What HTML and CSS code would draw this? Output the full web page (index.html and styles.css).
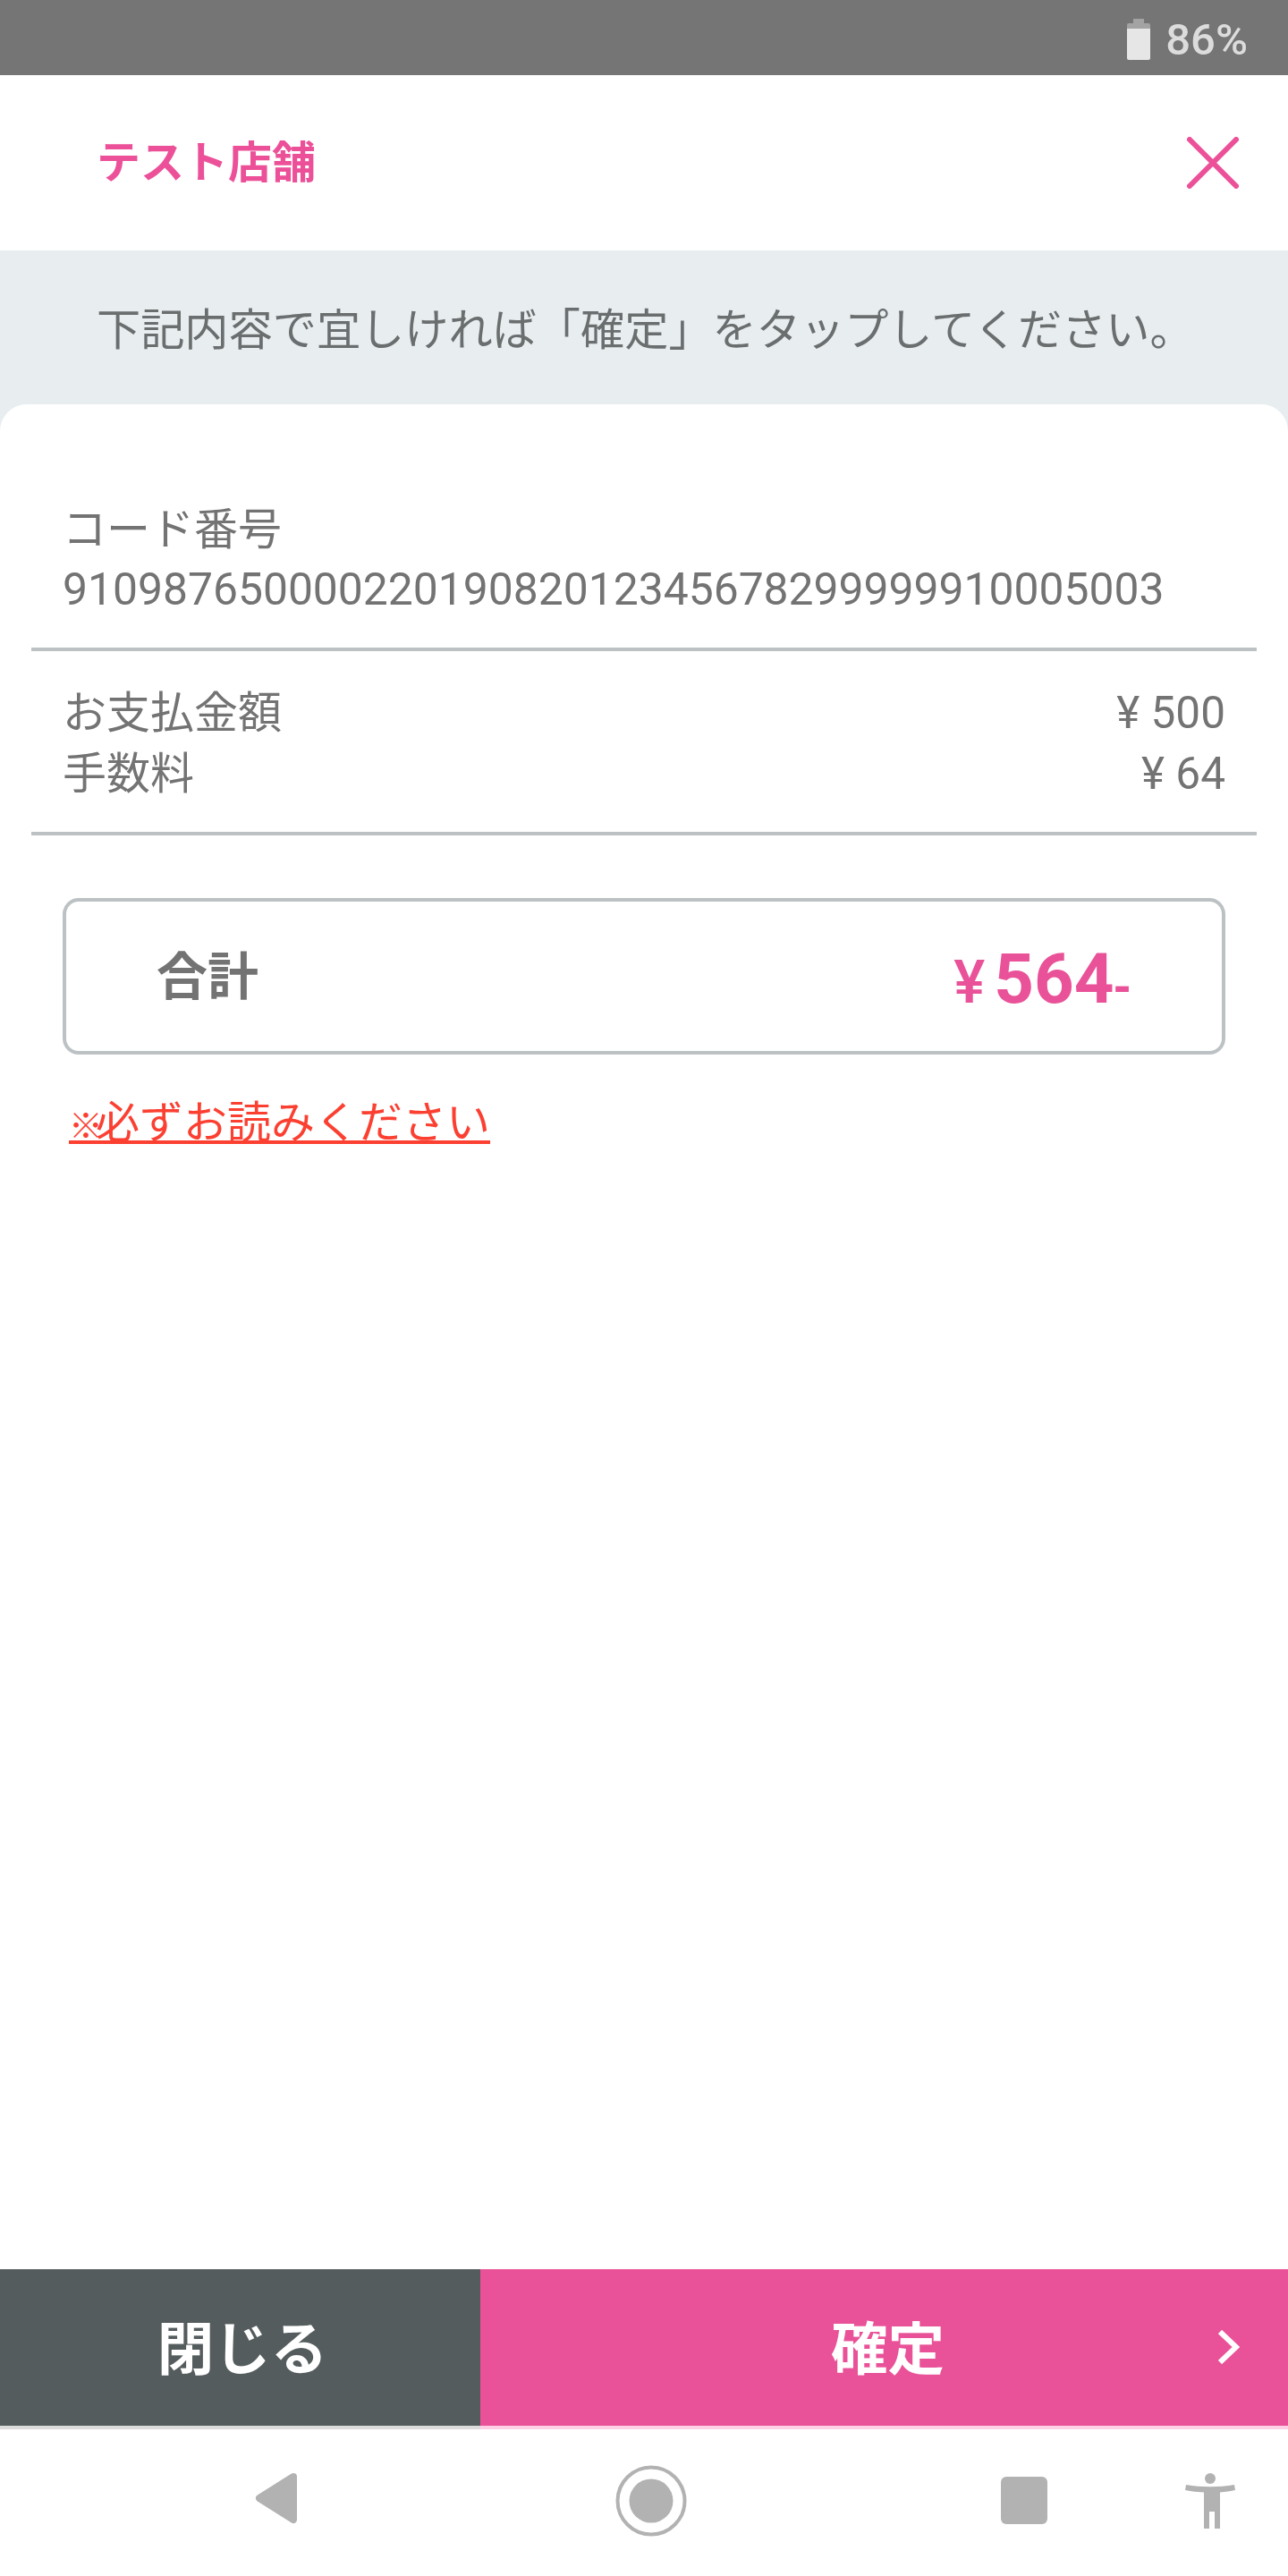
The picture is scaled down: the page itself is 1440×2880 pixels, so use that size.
FILE: index.html
```html
<!DOCTYPE html>
<html lang="ja">
<head>
<meta charset="utf-8">
<title>テスト店舗</title>
<link rel="stylesheet" href="styles.css">
</head>
<body>
<div class="screen">
  <div class="status">
    <svg class="battery" width="26" height="46" viewBox="0 0 26 46"><path class="bat-empty" d="M7 0h12v5h5a2 2 0 0 1 2 2v4H0V7a2 2 0 0 1 2-2h5z"/><path class="bat-full" d="M0 11h26v33a2 2 0 0 1-2 2H2a2 2 0 0 1-2-2z"/></svg>
    <span class="percent">86%</span>
  </div>
  <header class="head">
    <h1 class="store">テスト店舗</h1>
    <svg class="close" width="58" height="58" viewBox="0 0 58 58"><path d="M3 3l52 52M55 3L3 55"/></svg>
  </header>
  <div class="notice-band"><p class="notice">下記内容で宜しければ「確定」をタップしてください。</p></div>
  <main class="card">
    <section class="block code">
      <div class="line">コード番号</div>
      <div class="line number">91098765000022019082012345678299999910005003</div>
    </section>
    <section class="block fees">
      <div class="line row"><span>お支払金額</span><span class="amount">¥ 500</span></div>
      <div class="line row"><span>手数料</span><span class="amount">¥ 64</span></div>
    </section>
    <div class="total">
      <span class="total-label">合計</span>
      <span class="total-value"><span class="yen">¥</span><span class="sum">564</span><span class="dash">-</span></span>
    </div>
    <a class="warning"><span class="mark">※</span>必ずお読みください</a>
  </main>
  <div class="actions">
    <div class="btn btn-close">閉じる</div>
    <div class="btn btn-ok">確定
      <svg class="chevron" width="24" height="38" viewBox="0 0 24 38"><path d="M2 2l18 17L2 36"/></svg>
    </div>
  </div>
  <nav class="nav">
    <svg class="nav-back" width="50" height="58" viewBox="0 0 50 58"><path d="M43 5L5 29l38 24z"/></svg>
    <svg class="nav-home" width="80" height="80" viewBox="0 0 80 80"><circle class="ring" cx="40" cy="40" r="37.5"/><circle cx="40" cy="40" r="24.5"/></svg>
    <svg class="nav-recent" width="52" height="53" viewBox="0 0 52 53"><rect width="52" height="53" rx="6"/></svg>
    <svg class="nav-a11y" width="56" height="62" viewBox="0 0 56 62"><circle cx="28" cy="6" r="6"/><path d="M1 13c18 3 36 3 54 0l1 6c-5 1-11 2-17 2.500V62h-6V43h-6v19h-6V21.500C11 21 5 20 0 19z"/></svg>
  </nav>
</div>
</body>
</html>
```
FILE: styles.css
```css
* { box-sizing: border-box; }
html, body { margin: 0; padding: 0; }
body {
  width: 1440px;
  height: 2880px;
  background: #fff;
  font-family: "Noto Sans CJK JP", "Roboto", sans-serif;
  color: #737373;
}
.screen { display: flex; flex-direction: column; height: 2880px; }

.status {
  height: 84px;
  background: #757575;
  display: flex;
  align-items: flex-start;
  justify-content: flex-end;
  padding: 21px 45px 0 0;
}
.battery { display: block; margin-right: 17px; }
.bat-empty { fill: #a3a3a3; }
.bat-full { fill: #e6e6e6; }
.percent {
  font-family: "Roboto", sans-serif;
  font-weight: 500;
  font-size: 49px;
  line-height: 48px;
  color: #dcdcdc;
}

.head {
  height: 196px;
  display: flex;
  align-items: center;
  justify-content: space-between;
  padding: 0 55px 0 108px;
}
.store {
  margin: -8px 0 0;
  font-size: 49px;
  font-weight: 700;
  line-height: 60px;
  color: #ec5098;
}
.close { display: block; }
.close path { fill: none; stroke: #ec5098; stroke-width: 6px; stroke-linecap: round; }

.notice-band {
  height: 202px;
  background: #e8edf0;
  padding: 53px 0 0 108px;
}
.notice { margin: 0; font-size: 49.2px; line-height: 64px; color: #6b6e6e; white-space: nowrap; }

.card {
  flex: 1;
  margin-top: -30px;
  background: #fff;
  border-radius: 30px 30px 0 0;
  padding: 0 35px;
  position: relative;
}
.block { border-bottom: 4px solid #bcc2c4; padding: 0 35px; }
.code { height: 276px; padding-top: 102px; }
.fees { height: 206px; padding-top: 31px; }
.line { font-size: 49px; line-height: 68px; white-space: nowrap; }
.number { font-family: "Roboto", sans-serif; font-size: 49.8px; padding-top: 3px; }
.row { display: flex; justify-content: space-between; }
.amount { font-family: "Roboto", sans-serif; font-size: 49.5px; padding-top: 4px; margin-bottom: -4px; }

.total {
  margin: 70px 35px 0;
  height: 175px;
  border: 4px solid #bcc2c4;
  border-radius: 18px;
  display: flex;
  align-items: center;
  padding: 0 100px 0 101px;
  justify-content: space-between;
}
.total-label { font-size: 57px; font-weight: 700; line-height: 70px; margin-bottom: 10px; }
.total-value { display: flex; align-items: baseline; color: #e95298; font-family: "Roboto", sans-serif; font-weight: 700; margin-top: 6px; }
.yen { font-size: 66px; font-weight: 500; margin-right: 10px; }
.sum { font-size: 78px; line-height: 90px; }
.dash { font-size: 50px; font-weight: 900; margin-left: -2px; }

.warning {
  display: inline-block;
  margin: 40px 0 0 42px;
  font-size: 49px;
  line-height: 64px;
  color: #fb4032;
  text-decoration: underline;
}
.mark { font-size: 38px; font-weight: 700; letter-spacing: -8px; }

.actions { display: flex; height: 179px; }
.btn {
  height: 179px;
  border-bottom: 4px solid;
  display: flex;
  align-items: center;
  justify-content: center;
  color: #fff;
  font-size: 63.5px;
  font-weight: 700;
  padding-bottom: 8px;
}
.btn-close { width: 537px; background: #555c5e; border-color: #dcdcdc; padding-left: 5px; }
.btn-ok { flex: 1; background: #e95298; border-color: #fdd0e6; position: relative; padding-left: 8px; }
.chevron { position: absolute; right: 54px; top: 68px; }
.chevron path { fill: none; stroke: #fff; stroke-width: 6px; }

.nav {
  height: 164px;
  display: flex;
  align-items: flex-start;
  padding-left: 285px;
}
.nav svg { display: block; fill: #b2b2b2; }
.nav-back { margin-top: 48px; }
.nav-back path { stroke: #b2b2b2; stroke-width: 8px; stroke-linejoin: round; }
.nav-home { margin: 40px 0 0 353px; }
.ring { fill: none; stroke: #b2b2b2; stroke-width: 4px; }
.nav-recent { margin: 53px 0 0 351px; }
.nav-a11y { margin: 49px 0 0 154px; }
```
